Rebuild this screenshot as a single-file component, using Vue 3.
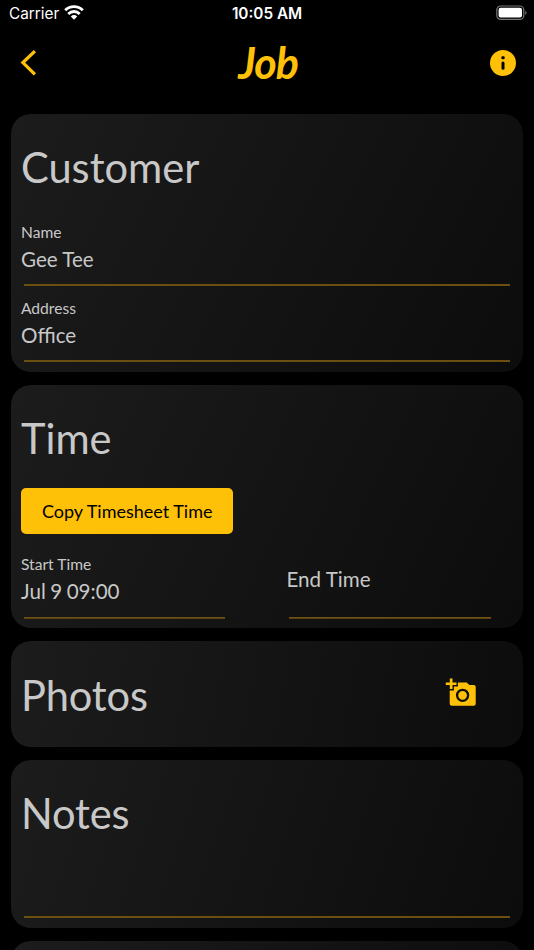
<script setup>
const details = [
  { label: 'Name', value: 'Gee Tee' },
  { label: 'Address', value: 'Office' },
]
</script>

<template>
  <div class="screen">
    <div class="status">
      <div class="carrier">
        <span>Carrier</span>
        <svg width="20" height="15" viewBox="0 0 20 15">
          <g fill="none" stroke="#fff" stroke-width="2.8">
            <path d="M1.2 5.2a12.5 12.5 0 0 1 17.6 0" />
            <path d="M4.3 8.9a8 8 0 0 1 11.4 0" />
          </g>
          <path d="M6.8 11.4a4.6 4.6 0 0 1 6.4 0L10 14.7z" fill="#fff" />
        </svg>
      </div>
      <span class="clock">10:05 AM</span>
      <svg class="battery" width="32" height="16" viewBox="0 0 32 16">
        <rect x=".8" y="1" width="27" height="13.4" rx="4" fill="none" stroke="#777" stroke-width="1.2" />
        <rect x="2.6" y="2.8" width="23.4" height="9.8" rx="2" fill="#fff" />
        <path d="M29.3 5.4q2.6 2.3 0 4.7z" fill="#777" />
      </svg>
    </div>

    <header class="nav">
      <svg class="back" width="18" height="28" viewBox="0 0 18 28">
        <path d="M14.9 2.1 2.9 13.6l12 11.8" fill="none" stroke="#ffc107" stroke-width="3.3" />
      </svg>
      <h1>Job</h1>
      <svg class="info" width="26" height="26" viewBox="0 0 26 26">
        <circle cx="13" cy="13" r="13" fill="#ffc107" />
        <rect x="11.4" y="6.2" width="3.2" height="3" rx="1" fill="#000" />
        <rect x="11.5" y="11.4" width="3" height="8.4" rx="1.5" fill="#000" />
      </svg>
    </header>

    <main>
      <section class="card customer">
        <h2>Customer</h2>
        <div v-for="item in details" :key="item.label" class="field">
          <span class="label">{{ item.label }}</span>
          <span class="value">{{ item.value }}</span>
        </div>
      </section>

      <section class="card time">
        <h2>Time</h2>
        <button>Copy Timesheet Time</button>
        <div class="times">
          <div class="field">
            <span class="label">Start Time</span>
            <span class="value date">Jul 9 09:00</span>
          </div>
          <div class="field empty">
            <span class="value">End Time</span>
          </div>
        </div>
      </section>

      <section class="card photos">
        <h2>Photos</h2>
        <svg class="camera" width="32" height="32" viewBox="0 0 32 32">
          <path d="M12.9 5.4h8.8l2.6 2.7h4.4q2 0 2 2v16.6q0 2-2 2H6.7q-2 0-2-2V13.6h4.2V9.6h4z" fill="#ffc107" />
          <path d="M4.8 1.4h2.7v4.1h4v2.6h-4v4H4.8v-4H.8V5.5h4z" fill="#ffc107" />
          <circle cx="17.6" cy="18.3" r="5.5" fill="none" stroke="#0e0e0e" stroke-width="2.3" />
        </svg>
      </section>

      <section class="card notes">
        <h2>Notes</h2>
        <div class="field note"></div>
      </section>

      <section class="card next"></section>
    </main>
  </div>
</template>

<style>
body {
  background: #000;
}
</style>

<style scoped>
.screen {
  height: 950px;
  overflow: hidden;
  background: #000;
  color: #c8c8c8;
  font-family: Lato, sans-serif;
}
.status {
  display: grid;
  grid-template-columns: 1fr auto 1fr;
  align-items: center;
  height: 28px;
  padding: 0 6px 0 9px;
  color: #fff;
  font: 15.3px/28px Inter, sans-serif;
}
.carrier {
  display: flex;
  align-items: center;
  gap: 5px;
}
.carrier svg {
  margin-top: -3px;
}
.clock {
  margin-right: 3px;
  font-weight: 600;
}
.battery {
  justify-self: end;
  margin-top: -2px;
}
.nav {
  display: grid;
  grid-template-columns: 1fr auto 1fr;
  align-items: center;
  height: 69px;
  padding: 0 18px 0 20px;
}
h1 {
  margin: 0;
  color: #ffc107;
  font: italic 700 43px/60px Lato, cursive;
  letter-spacing: -1px;
}
.info {
  justify-self: end;
}
main {
  display: flex;
  flex-direction: column;
  gap: 13.2px;
  padding: 16.6px 10.6px 0;
}
.card {
  box-sizing: border-box;
  flex: none;
  border-radius: 20px;
  padding: 27.4px 10.4px 0;
  background: linear-gradient(116.7deg, #1c1c1c, #0c0c0c);
}
.customer {
  height: 258px;
}
.time {
  height: 243.5px;
  background: linear-gradient(115.4deg, #1c1c1c, #0c0c0c);
}
.photos {
  display: flex;
  justify-content: space-between;
  height: 105.4px;
  padding-right: 46px;
  background: linear-gradient(101.6deg, #1c1c1c, #0c0c0c);
}
.notes {
  height: 168px;
  background: linear-gradient(108.1deg, #1c1c1c, #0c0c0c);
}
.next {
  height: 100px;
}
h2 {
  margin: 0;
  font-size: 41.6px;
  font-weight: 400;
  line-height: 52px;
}
.photos h2,
.notes h2 {
  letter-spacing: -0.15px;
}
.field {
  display: flex;
  flex-direction: column;
  box-sizing: border-box;
  height: 76px;
}
.field::after {
  content: "";
  height: 2px;
  margin: auto 2.6px 0 3px;
  background: #6b4f10;
}
.customer h2 {
  margin-bottom: 17px;
}
.customer .field {
  padding-top: 12px;
}
.times .field {
  height: 81px;
  padding-top: 16px;
}
.times .field::after {
  background: linear-gradient(#7d5c10, #4a380f);
}
.label {
  font-size: 15.6px;
  line-height: 20px;
}
.value {
  margin-top: 4px;
  font-size: 20.6px;
  line-height: 26px;
}
.date {
  word-spacing: -0.8px;
}
button {
  display: block;
  width: 212.5px;
  height: 46px;
  margin-top: 23.5px;
  padding: 1px 0 0;
  border: 0;
  border-radius: 5px;
  background: #ffc107;
  color: #000;
  font: 18px/45px Lato, sans-serif;
}
.times {
  display: grid;
  grid-template-columns: 207px 207px;
  gap: 58.5px;
  margin-top: 4px;
}
.times .empty {
  padding-top: 24px;
}
.camera {
  margin: 8.5px 0 0;
}
.note {
  height: 78.6px;
}
</style>
